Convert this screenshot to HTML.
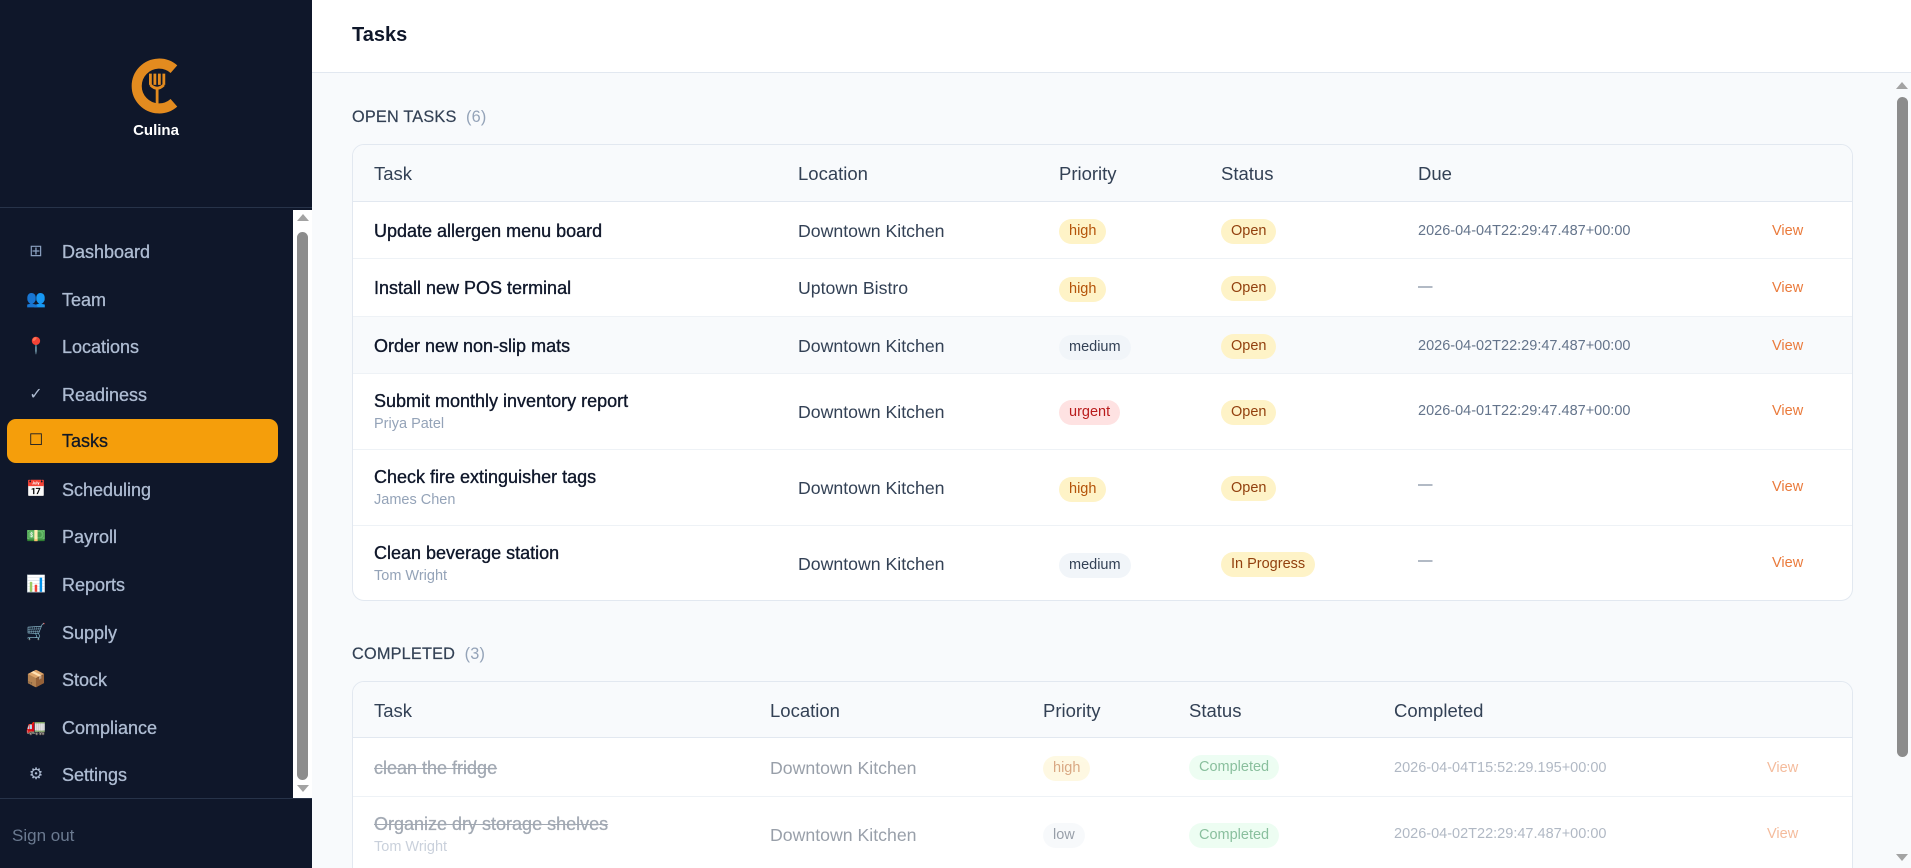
<!DOCTYPE html>
<html><head><meta charset="utf-8"><style>
*{box-sizing:border-box;margin:0;padding:0}
html,body{width:1911px;height:868px;overflow:hidden}
body{font-family:"Liberation Sans",sans-serif;background:#f8fafc;position:relative}
.sb{position:absolute;left:0;top:0;width:312px;height:868px;background:#0f172a}
.logo{position:absolute;left:0;top:58px;width:312px;text-align:center}
.culina{position:absolute;top:122px;width:312px;text-align:center;color:#fff;font-weight:bold;font-size:15px}
.div{position:absolute;left:0;width:312px;height:1px;background:#273349}
.nav{position:absolute;left:0;width:293px;height:44px;color:#aebcd2;font-size:18px;line-height:44px;-webkit-text-stroke:.3px #aebcd2}
.nav .ic{position:absolute;left:26px;top:0;width:20px;text-align:center;font-size:16px;-webkit-text-stroke:0}
.nav .t{position:absolute;left:62px}
.nav.act{left:7px;width:271px;background:#f59e0b;border-radius:9px;color:#111827;-webkit-text-stroke:.3px #111827}
.nav.act .ic{left:19px}.nav.act .t{left:55px}
.sscroll{position:absolute;left:293px;top:210px;width:19px;height:588px;background:#fff}
.thumb{position:absolute;background:#8c8c8c;border-radius:6px}
.top{position:absolute;left:312px;top:0;right:0;height:73px;background:#fff;border-bottom:1px solid #e2e8f0}
.top h1{position:absolute;left:40px;top:24px;font-size:20px;font-weight:bold;color:#0f172a}
.sec{position:absolute;left:352px;font-size:16.3px;color:#334155;letter-spacing:.2px;-webkit-text-stroke:.2px #334155}
.sec span{color:#94a3b8;-webkit-text-stroke:0}
.card{position:absolute;left:352px;width:1501px;background:#fff;border:1px solid #e2e8f0;border-radius:12px;overflow:hidden}
.hd{position:absolute;left:0;right:0;top:0;background:#f8fafc;border-bottom:1px solid #e2e8f0}
.row{position:absolute;left:0;right:0;border-bottom:1px solid #eef2f6}
.c{position:absolute;white-space:nowrap}
.h{font-size:18.5px;color:#334155}
.nm{font-size:18px;color:#0f172a;-webkit-text-stroke:.35px #0f172a}
.sub{font-size:14.5px;color:#94a3b8}
.loc{font-size:17.7px;color:#334155}
.b{display:inline-block;font-size:14.5px;padding:0 10px;height:25px;line-height:25px;border-radius:13px}
.hi{background:#fef3c7;color:#b45309}.me{background:#f1f5f9;color:#334155}.ur{background:#fee2e2;color:#b91c1c}
.op{background:#fef3c7;color:#92400e}.cp{background:#dcfce7;color:#15803d}
.du{font-size:14.5px;color:#64748b}
.v{font-size:14.5px;color:#ea7a3b}
.done .c{opacity:.5}
.done .nm{text-decoration:line-through;color:#475569;-webkit-text-stroke:.3px #475569}
</style></head><body>
<div class="sb">
 <div class="logo"><svg width="58" height="56" viewBox="0 0 48 50"><path d="M40 10 A20 20 0 1 0 40 40" fill="none" stroke="#e38b1f" stroke-width="9"/><path d="M19 14v10M23 14v10M27 14v10M31 14v10M19 24q6 6 12 0M25 27v18" stroke="#e38b1f" stroke-width="2.5" fill="none"/></svg></div>
 <div class="culina">Culina</div>
 <div class="div" style="top:207px"></div>
 <div class="nav" style="top:230px"><span class="ic" style="color:#8aa0bf">⊞</span><span class="t">Dashboard</span></div>
 <div class="nav" style="top:278px"><span class="ic" style="color:#7c4dbb">👥</span><span class="t">Team</span></div>
 <div class="nav" style="top:325px"><span class="ic" style="color:#e11d48">📍</span><span class="t">Locations</span></div>
 <div class="nav" style="top:373px"><span class="ic">✓</span><span class="t">Readiness</span></div>
 <div class="nav act" style="top:419px"><span class="ic">☐</span><span class="t">Tasks</span></div>
 <div class="nav" style="top:468px"><span class="ic">📅</span><span class="t">Scheduling</span></div>
 <div class="nav" style="top:515px"><span class="ic">💵</span><span class="t">Payroll</span></div>
 <div class="nav" style="top:563px"><span class="ic">📊</span><span class="t">Reports</span></div>
 <div class="nav" style="top:611px"><span class="ic">🛒</span><span class="t">Supply</span></div>
 <div class="nav" style="top:658px"><span class="ic">📦</span><span class="t">Stock</span></div>
 <div class="nav" style="top:706px"><span class="ic">🚛</span><span class="t">Compliance</span></div>
 <div class="nav" style="top:753px"><span class="ic">⚙</span><span class="t">Settings</span></div>
 <div class="sscroll"><div style="position:absolute;left:4px;top:4px;border:6px solid transparent;border-bottom:7px solid #a3a3a3;border-top:0"></div><div class="thumb" style="left:4px;top:22px;width:11px;height:548px"></div><div style="position:absolute;left:4px;top:575px;border:6px solid transparent;border-top:7px solid #a3a3a3;border-bottom:0"></div></div>
 <div class="div" style="top:798px"></div>
 <div style="position:absolute;left:12px;top:826px;font-size:17px;color:#6b7a90">Sign out</div>
</div>
<div class="top"><h1>Tasks</h1></div>
<div style="position:absolute;left:1892px;top:74px;width:19px;height:794px;background:#f8fafc"><div style="position:absolute;left:4px;top:8px;border:6px solid transparent;border-bottom:7px solid #a3a3a3;border-top:0"></div><div class="thumb" style="left:5px;top:23px;width:11px;height:660px"></div><div style="position:absolute;left:4px;top:780px;border:6px solid transparent;border-top:7px solid #a3a3a3;border-bottom:0"></div></div>

<div class="sec" style="top:108px">OPEN TASKS <span>&nbsp;(6)</span></div>
<div class="card" style="top:144px;height:457px">
 <div class="hd" style="height:57px"><span class="c h" style="left:21px;top:18px">Task</span><span class="c h" style="left:445px;top:18px">Location</span><span class="c h" style="left:706px;top:18px">Priority</span><span class="c h" style="left:868px;top:18px">Status</span><span class="c h" style="left:1065px;top:18px">Due</span></div>
 <div class="row" style="top:57px;height:57px"><span class="c nm" style="left:21px;top:19px">Update allergen menu board</span><span class="c loc" style="left:445px;top:19px">Downtown Kitchen</span><span class="c b hi" style="left:706px;top:17px">high</span><span class="c b op" style="left:868px;top:17px">Open</span><span class="c du" style="left:1065px;top:21px">2026-04-04T22:29:47.487+00:00</span><span class="c v" style="left:1419px;top:21px">View</span></div>
 <div class="row" style="top:114px;height:58px"><span class="c nm" style="left:21px;top:19px">Install new POS terminal</span><span class="c loc" style="left:445px;top:19px">Uptown Bistro</span><span class="c b hi" style="left:706px;top:18px">high</span><span class="c b op" style="left:868px;top:17px">Open</span><span class="c du" style="left:1065px;top:20px">—</span><span class="c v" style="left:1419px;top:21px">View</span></div>
 <div class="row" style="top:172px;height:57px;background:#f8fafc"><span class="c nm" style="left:21px;top:19px">Order new non-slip mats</span><span class="c loc" style="left:445px;top:19px">Downtown Kitchen</span><span class="c b me" style="left:706px;top:18px">medium</span><span class="c b op" style="left:868px;top:17px">Open</span><span class="c du" style="left:1065px;top:21px">2026-04-02T22:29:47.487+00:00</span><span class="c v" style="left:1419px;top:21px">View</span></div>
 <div class="row" style="top:229px;height:76px"><span class="c nm" style="left:21px;top:17px">Submit monthly inventory report</span><span class="c sub" style="left:21px;top:42px">Priya Patel</span><span class="c loc" style="left:445px;top:28px">Downtown Kitchen</span><span class="c b ur" style="left:706px;top:26px">urgent</span><span class="c b op" style="left:868px;top:26px">Open</span><span class="c du" style="left:1065px;top:29px">2026-04-01T22:29:47.487+00:00</span><span class="c v" style="left:1419px;top:29px">View</span></div>
 <div class="row" style="top:305px;height:76px"><span class="c nm" style="left:21px;top:17px">Check fire extinguisher tags</span><span class="c sub" style="left:21px;top:42px">James Chen</span><span class="c loc" style="left:445px;top:28px">Downtown Kitchen</span><span class="c b hi" style="left:706px;top:27px">high</span><span class="c b op" style="left:868px;top:26px">Open</span><span class="c du" style="left:1065px;top:27px">—</span><span class="c v" style="left:1419px;top:29px">View</span></div>
 <div class="row" style="top:381px;height:76px;border:0"><span class="c nm" style="left:21px;top:17px">Clean beverage station</span><span class="c sub" style="left:21px;top:42px">Tom Wright</span><span class="c loc" style="left:445px;top:28px">Downtown Kitchen</span><span class="c b me" style="left:706px;top:27px">medium</span><span class="c b op" style="left:868px;top:26px">In Progress</span><span class="c du" style="left:1065px;top:27px">—</span><span class="c v" style="left:1419px;top:29px">View</span></div>
</div>

<div class="sec" style="top:645px">COMPLETED <span>&nbsp;(3)</span></div>
<div class="card" style="top:681px;height:200px">
 <div class="hd" style="height:56px"><span class="c h" style="left:21px;top:18px">Task</span><span class="c h" style="left:417px;top:18px">Location</span><span class="c h" style="left:690px;top:18px">Priority</span><span class="c h" style="left:836px;top:18px">Status</span><span class="c h" style="left:1041px;top:18px">Completed</span></div>
 <div class="row done" style="top:56px;height:59px"><span class="c nm" style="left:21px;top:20px">clean the fridge</span><span class="c loc" style="left:417px;top:20px">Downtown Kitchen</span><span class="c b hi" style="left:690px;top:18px">high</span><span class="c b cp" style="left:836px;top:17px">Completed</span><span class="c du" style="left:1041px;top:22px">2026-04-04T15:52:29.195+00:00</span><span class="c v" style="left:1414px;top:22px">View</span></div>
 <div class="row done" style="top:115px;height:76px"><span class="c nm" style="left:21px;top:17px">Organize dry storage shelves</span><span class="c sub" style="left:21px;top:42px">Tom Wright</span><span class="c loc" style="left:417px;top:28px">Downtown Kitchen</span><span class="c b me" style="left:690px;top:26px">low</span><span class="c b cp" style="left:836px;top:26px">Completed</span><span class="c du" style="left:1041px;top:29px">2026-04-02T22:29:47.487+00:00</span><span class="c v" style="left:1414px;top:29px">View</span></div>
</div>
</body></html>
